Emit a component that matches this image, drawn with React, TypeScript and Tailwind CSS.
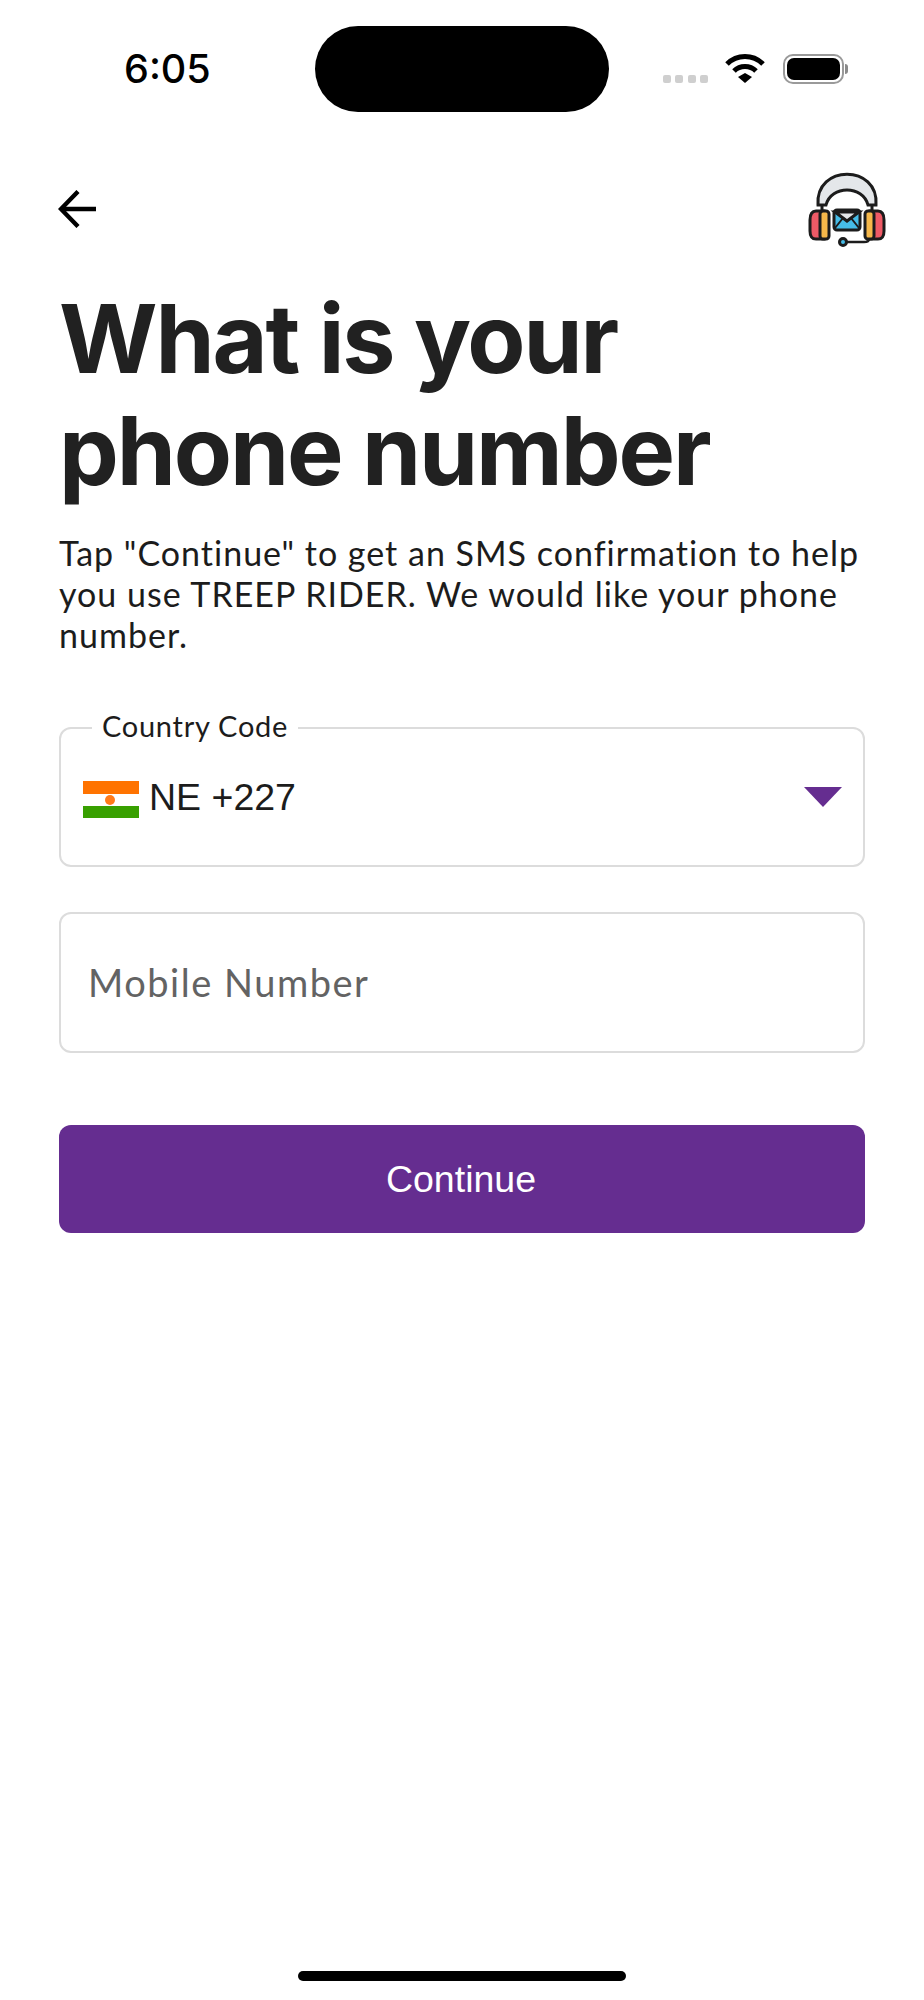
const bodyFont = { fontFamily: 'Lato, sans-serif' };

function Wifi() {
  return (
    <svg width="40" height="30" viewBox="0 0 40 30" fill="none">
      <path d="M2 11 C12 1 28 1 38 11" stroke="#000" strokeWidth="5" />
      <path d="M9 18 C15 12 25 12 31 18" stroke="#000" strokeWidth="5" />
      <path d="M13 24 L20 20 L27 24 L20 30 Z" fill="#000" />
    </svg>
  );
}

function Battery() {
  return (
    <div className="flex items-center">
      <div className="w-[61px] h-[30px] rounded-[10px] border-[2px] border-[#9a9a9a] p-[2px]">
        <div className="w-full h-full rounded-[7px] bg-black" />
      </div>
      <div className="w-[3px] h-[10px] bg-[#8a8a8a] rounded-r-full ml-[1px]" />
    </div>
  );
}

function BackArrow() {
  return (
    <svg width="38" height="38" viewBox="0 0 38 38" fill="none" stroke="#000" strokeWidth="4.4">
      <path d="M38 19 H3" />
      <path d="M20 1.5 L3 19 L20 36.5" />
    </svg>
  );
}

function SupportIcon() {
  return (
    <svg width="78" height="76" viewBox="0 -2 78 76" fill="none" stroke="#1c1c1c" strokeWidth="3">
      <path d="M10 32 C7 -9 71 -9 68 32 L60 32 C55 12 23 12 18 32 Z" fill="#e4e7ea" />
      <path d="M14 32 V42 M64 32 V42" />
      <path d="M16 38 H8 C3 38 2 42 2 47 V58 C2 64 4 66 8 66 H16 Z" fill="#ee5a66" />
      <rect x="12" y="38" width="9" height="28" rx="3" fill="#f6b84a" />
      <path d="M62 38 H70 C75 38 76 42 76 47 V58 C76 64 74 66 70 66 H62 Z" fill="#ee5a66" />
      <rect x="57" y="38" width="9" height="28" rx="3" fill="#f6b84a" />
      <rect x="26" y="37" width="26" height="20" rx="3" fill="#46bde8" />
      <path d="M27 39 L39 48 L51 39 Z" fill="#e4e7ea" />
      <path d="M27 55 L35 45 M51 55 L43 45" strokeWidth="2" />
      <circle cx="35" cy="69" r="3.5" fill="#46bde8" />
      <path d="M39 69 H56 C59 69 61 68 61 66" strokeWidth="2.5" />
    </svg>
  );
}

function NigerFlag() {
  return (
    <div className="w-[56px] h-[37px] flex flex-col shrink-0 mt-[5px]">
      <div className="h-[13px] bg-[#ff7300]" />
      <div className="h-[12px] bg-white flex items-center justify-center pr-[2px]">
        <div className="w-[10px] h-[10px] rounded-full bg-[#ff7a1a]" />
      </div>
      <div className="h-[12px] bg-[#38a000]" />
    </div>
  );
}

export default function App() {
  return (
    <div className="w-[924px] h-[2000px] bg-white flex flex-col overflow-hidden" style={{ fontFamily: 'Inter, sans-serif' }}>
      {/* Status bar */}
      <div className="flex items-center justify-between pt-[26px] h-[112px] pl-[124px] pr-[76px] shrink-0">
        <span className="text-[39.5px] font-medium text-black leading-none w-[191px] mt-[1px]">6:05</span>
        <div className="w-[294px] h-[86px] rounded-[43px] bg-black shrink-0" />
        <div className="flex items-center w-[239px] justify-end">
          <div className="flex gap-[4.5px] mt-[20px] mr-[17px]">
            <div className="w-[8px] h-[8px] rounded-[2px] bg-[#cfcfcf]" />
            <div className="w-[8px] h-[8px] rounded-[2px] bg-[#cfcfcf]" />
            <div className="w-[8px] h-[8px] rounded-[2px] bg-[#cfcfcf]" />
            <div className="w-[8px] h-[8px] rounded-[2px] bg-[#cfcfcf]" />
          </div>
          <div className="mr-[18px] -mt-[2px]"><Wifi /></div>
          <Battery />
        </div>
      </div>

      {/* Nav row */}
      <div className="flex items-center justify-between pl-[58px] pr-[38px] mt-[59px] h-[76px] shrink-0">
        <BackArrow />
        <SupportIcon />
      </div>

      <div className="px-[59px] flex flex-col">
        <h1 className="text-[95px] font-bold text-[#212121] leading-[112px] tracking-[-0.022em] mt-[36px] whitespace-nowrap">
          What is your<br />phone number
        </h1>

        <p className="text-[34px] leading-[41px] text-[#1c1c1c] mt-[25px] tracking-[1px] whitespace-nowrap" style={bodyFont}>
          Tap "Continue" to get an SMS confirmation to help<br />
          you use TREEP RIDER. We would like your phone<br />
          number.
        </p>

        {/* Country code */}
        <div className="relative mt-[72px] h-[140px] border-2 border-[#dcdcdc] rounded-[12px] flex items-center pl-[22px] pr-[21px]">
          <span className="absolute left-[31px] -top-[21px] bg-white px-[10px] text-[29px] leading-[36px] text-[#1c1c1c] tracking-[0.025em]" style={bodyFont}>
            Country Code
          </span>
          <NigerFlag />
          <span className="ml-[10px] text-[37.5px] text-[#1c1c1c]" style={{ fontFamily: '"Liberation Sans", sans-serif' }}>NE +227</span>
          <svg width="38" height="20" viewBox="0 0 38 20" className="ml-auto">
            <path d="M0 0 H38 L19 20 Z" fill="#652d90" />
          </svg>
        </div>

        {/* Mobile number */}
        <div className="mt-[45px] h-[141px] border-2 border-[#dcdcdc] rounded-[12px] flex items-center pl-[27px]">
          <span className="text-[38px] text-[#636363] tracking-[0.04em]" style={bodyFont}>Mobile Number</span>
        </div>

        <button
          className="mt-[72px] h-[108px] rounded-[12px] bg-[#652d90] text-white text-[37.5px] flex items-center justify-center pr-[2px]"
          style={{ fontFamily: '"Liberation Sans", sans-serif' }}
        >
          Continue
        </button>
      </div>

      <div className="mt-auto mb-[19px] w-[328px] h-[10px] rounded-full bg-black self-center shrink-0" />
    </div>
  );
}
